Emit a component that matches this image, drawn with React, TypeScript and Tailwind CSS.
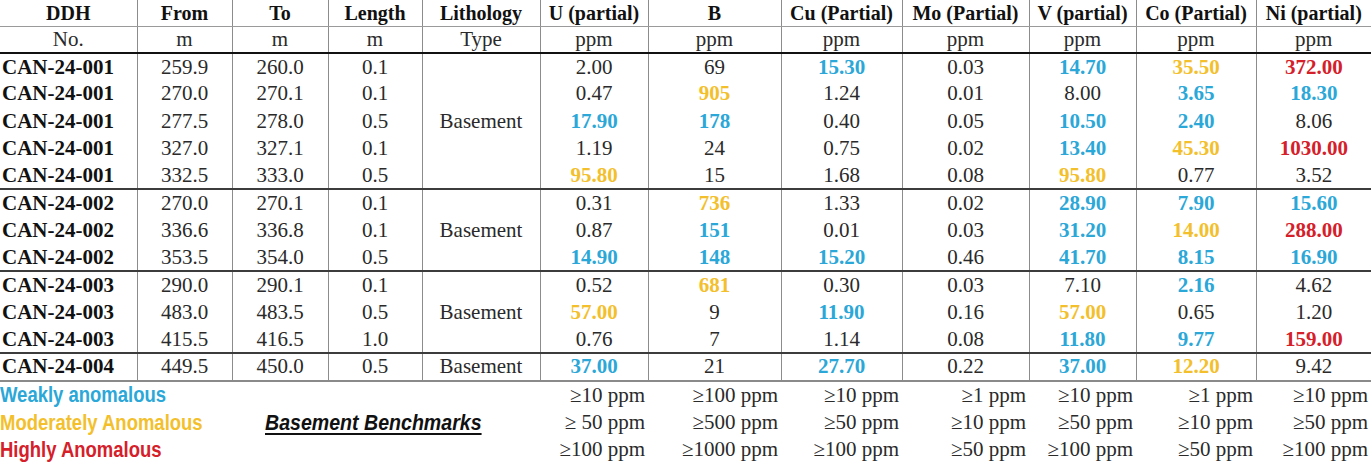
import type React from "react";
import clsx from "clsx";

type Tone = "b" | "y" | "r" | undefined;
type Val = [string, Tone?];

type Group = {
  ddh: string;
  rows: { from: string; to: string; len: string; vals: Val[] }[];
};

const toneClass: Record<string, string> = {
  b: "text-[#2ba7d8] font-bold",
  y: "text-[#f3c02c] font-bold",
  r: "text-[#d5202a] font-bold",
};

const groups: Group[] = [
  {
    ddh: "CAN-24-001",
    rows: [
      { from: "259.9", to: "260.0", len: "0.1", vals: [["2.00"], ["69"], ["15.30", "b"], ["0.03"], ["14.70", "b"], ["35.50", "y"], ["372.00", "r"]] },
      { from: "270.0", to: "270.1", len: "0.1", vals: [["0.47"], ["905", "y"], ["1.24"], ["0.01"], ["8.00"], ["3.65", "b"], ["18.30", "b"]] },
      { from: "277.5", to: "278.0", len: "0.5", vals: [["17.90", "b"], ["178", "b"], ["0.40"], ["0.05"], ["10.50", "b"], ["2.40", "b"], ["8.06"]] },
      { from: "327.0", to: "327.1", len: "0.1", vals: [["1.19"], ["24"], ["0.75"], ["0.02"], ["13.40", "b"], ["45.30", "y"], ["1030.00", "r"]] },
      { from: "332.5", to: "333.0", len: "0.5", vals: [["95.80", "y"], ["15"], ["1.68"], ["0.08"], ["95.80", "y"], ["0.77"], ["3.52"]] },
    ],
  },
  {
    ddh: "CAN-24-002",
    rows: [
      { from: "270.0", to: "270.1", len: "0.1", vals: [["0.31"], ["736", "y"], ["1.33"], ["0.02"], ["28.90", "b"], ["7.90", "b"], ["15.60", "b"]] },
      { from: "336.6", to: "336.8", len: "0.1", vals: [["0.87"], ["151", "b"], ["0.01"], ["0.03"], ["31.20", "b"], ["14.00", "y"], ["288.00", "r"]] },
      { from: "353.5", to: "354.0", len: "0.5", vals: [["14.90", "b"], ["148", "b"], ["15.20", "b"], ["0.46"], ["41.70", "b"], ["8.15", "b"], ["16.90", "b"]] },
    ],
  },
  {
    ddh: "CAN-24-003",
    rows: [
      { from: "290.0", to: "290.1", len: "0.1", vals: [["0.52"], ["681", "y"], ["0.30"], ["0.03"], ["7.10"], ["2.16", "b"], ["4.62"]] },
      { from: "483.0", to: "483.5", len: "0.5", vals: [["57.00", "y"], ["9"], ["11.90", "b"], ["0.16"], ["57.00", "y"], ["0.65"], ["1.20"]] },
      { from: "415.5", to: "416.5", len: "1.0", vals: [["0.76"], ["7"], ["1.14"], ["0.08"], ["11.80", "b"], ["9.77", "b"], ["159.00", "r"]] },
    ],
  },
  {
    ddh: "CAN-24-004",
    rows: [
      { from: "449.5", to: "450.0", len: "0.5", vals: [["37.00", "b"], ["21"], ["27.70", "b"], ["0.22"], ["37.00", "b"], ["12.20", "y"], ["9.42"]] },
    ],
  },
];

const widths = [137, 95, 96, 94, 118, 108, 133, 121, 127, 107, 120, 115];

const headers = ["DDH", "From", "To", "Length", "Lithology", "U (partial)", "B", "Cu (Partial)", "Mo (Partial)", "V (partial)", "Co (Partial)", "Ni (partial)"];
const units = ["No.", "m", "m", "m", "Type", "ppm", "ppm", "ppm", "ppm", "ppm", "ppm", "ppm"];

const benchmarks = [
  ["≥10 ppm", "≥100 ppm", "≥10 ppm", "≥1 ppm", "≥10 ppm", "≥1 ppm", "≥10 ppm"],
  ["≥ 50 ppm", "≥500 ppm", "≥50 ppm", "≥10 ppm", "≥50 ppm", "≥10 ppm", "≥50 ppm"],
  ["≥100 ppm", "≥1000 ppm", "≥100 ppm", "≥50 ppm", "≥100 ppm", "≥50 ppm", "≥100 ppm"],
];

const legend = [
  { label: "Weakly anomalous", cls: "text-[#2ba7d8]" },
  { label: "Moderately Anomalous", cls: "text-[#f3c02c]" },
  { label: "Highly Anomalous", cls: "text-[#d5202a]" },
];

const vline = "border-l border-[#8c8c8c]";
const narrow =
  "inline-block origin-left [font-family:'Liberation_Sans',Arial,sans-serif] font-bold text-[22px]";

const DataGroup: React.FC<{ group: Group; first: boolean }> = ({ group, first }) => (
  <>
    {group.rows.map((row, i) => {
      const top = i === 0 && !first ? "border-t-2 border-t-[#3c3c3c]" : "";
      return (
        <tr key={i} className="h-[27.3px]">
          <td className={clsx("pl-[2px] font-bold text-[#111]", top)}>{group.ddh}</td>
          <td className={clsx("text-center", vline, top)}>{row.from}</td>
          <td className={clsx("text-center", vline, top)}>{row.to}</td>
          <td className={clsx("text-center", vline, top)}>{row.len}</td>
          {i === 0 && (
            <td rowSpan={group.rows.length} className={clsx("text-center", vline, top)}>
              Basement
            </td>
          )}
          {row.vals.map(([v, t], j) => (
            <td key={j} className={clsx("text-center", vline, top, t && toneClass[t])}>
              {v}
            </td>
          ))}
        </tr>
      );
    })}
  </>
);

export default function App() {
  return (
    <div className="w-[1371px] h-[470px] bg-white overflow-hidden [font-family:'Liberation_Serif','Times_New_Roman',serif] text-[21px] leading-none text-[#2a2a2a]">
      <table className="table-fixed border-collapse w-[1371px]">
        <colgroup>
          {widths.map((w, i) => (
            <col key={i} style={{ width: w }} />
          ))}
        </colgroup>
        <thead>
          <tr className="h-[26px]">
            {headers.map((h, i) => (
              <th
                key={h}
                className={clsx(
                  "text-center text-[20px] font-bold text-[#111] whitespace-nowrap border-b border-b-[#9a9a9a]",
                  i > 0 && vline,
                )}
              >
                {h}
              </th>
            ))}
          </tr>
          <tr className="h-[27px]">
            {units.map((u, i) => (
              <td
                key={i}
                className={clsx("text-center border-b-2 border-b-[#111]", i > 0 && vline)}
              >
                {u}
              </td>
            ))}
          </tr>
        </thead>
        <tbody>
          {groups.map((g, i) => (
            <DataGroup key={g.ddh} group={g} first={i === 0} />
          ))}
        </tbody>
        <tfoot>
          {legend.map((l, r) => (
            <tr
              key={l.label}
              className={clsx(r === 2 ? "h-[26px]" : "h-[28px]", r === 0 && "border-t-2 border-t-[#8a8a8a]")}
            >
              <td colSpan={2} className={clsx("text-left whitespace-nowrap", l.cls)}>
                <span className={clsx(narrow, "scale-x-[0.84]")}>{l.label}</span>
              </td>
              <td colSpan={3} className="pl-[33px] whitespace-nowrap">
                {r === 1 && (
                  <span
                    className={clsx(
                      narrow,
                      "scale-x-[0.89] italic underline underline-offset-[3px] text-[#111]",
                    )}
                  >
                    Basement Benchmarks
                  </span>
                )}
              </td>
              {benchmarks[r].map((b, j) => (
                <td key={j} className="text-right pr-[3px] whitespace-nowrap">
                  {b}
                </td>
              ))}
            </tr>
          ))}
        </tfoot>
      </table>
    </div>
  );
}
